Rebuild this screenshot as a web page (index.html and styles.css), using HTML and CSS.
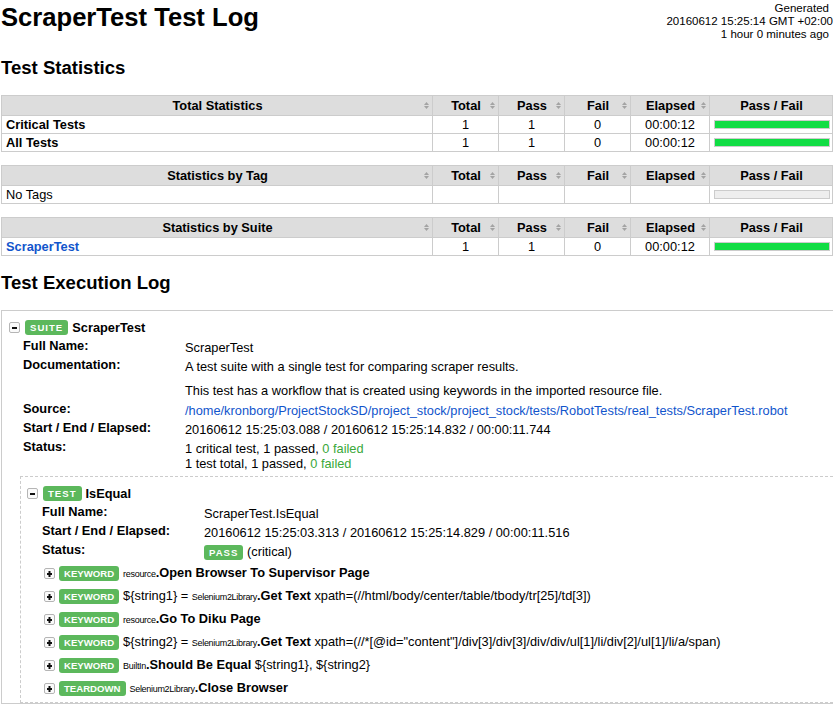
FILE: index.html
```html
<!DOCTYPE html>
<html lang="en">
<head>
<meta charset="utf-8">
<title>ScraperTest Test Log</title>
<link rel="stylesheet" href="styles.css">
</head>
<body>
<div class="header">
  <h1 class="title">ScraperTest Test Log</h1>
  <div class="generated">
    <div class="gen-pad">Generated</div>
    <div>20160612 15:25:14 GMT +02:00</div>
    <div class="gen-pad">1 hour 0 minutes ago</div>
  </div>
</div>

<h2 class="section-title">Test Statistics</h2>

<div class="stats">
  <div class="head"><span class="txt">Total Statistics</span><svg class="sort" width="5" height="7" viewBox="0 0 5 7"><polygon points="0,3 2.5,0 5,3"/><polygon points="0,4 2.5,7 5,4"/></svg></div>
  <div class="head"><span class="txt">Total</span><svg class="sort" width="5" height="7" viewBox="0 0 5 7"><polygon points="0,3 2.5,0 5,3"/><polygon points="0,4 2.5,7 5,4"/></svg></div>
  <div class="head"><span class="txt">Pass</span><svg class="sort" width="5" height="7" viewBox="0 0 5 7"><polygon points="0,3 2.5,0 5,3"/><polygon points="0,4 2.5,7 5,4"/></svg></div>
  <div class="head"><span class="txt">Fail</span><svg class="sort" width="5" height="7" viewBox="0 0 5 7"><polygon points="0,3 2.5,0 5,3"/><polygon points="0,4 2.5,7 5,4"/></svg></div>
  <div class="head"><span class="txt">Elapsed</span><svg class="sort" width="5" height="7" viewBox="0 0 5 7"><polygon points="0,3 2.5,0 5,3"/><polygon points="0,4 2.5,7 5,4"/></svg></div>
  <div class="head"><span class="txt">Pass / Fail</span></div>

  <div class="cell name"><b>Critical Tests</b></div>
  <div class="cell num">1</div>
  <div class="cell num">1</div>
  <div class="cell num">0</div>
  <div class="cell num">00:00:12</div>
  <div class="cell graph"><div class="bar"><div class="pass-bar"></div></div></div>

  <div class="cell name"><b>All Tests</b></div>
  <div class="cell num">1</div>
  <div class="cell num">1</div>
  <div class="cell num">0</div>
  <div class="cell num">00:00:12</div>
  <div class="cell graph"><div class="bar"><div class="pass-bar"></div></div></div>
</div>

<div class="stats">
  <div class="head"><span class="txt">Statistics by Tag</span><svg class="sort" width="5" height="7" viewBox="0 0 5 7"><polygon points="0,3 2.5,0 5,3"/><polygon points="0,4 2.5,7 5,4"/></svg></div>
  <div class="head"><span class="txt">Total</span><svg class="sort" width="5" height="7" viewBox="0 0 5 7"><polygon points="0,3 2.5,0 5,3"/><polygon points="0,4 2.5,7 5,4"/></svg></div>
  <div class="head"><span class="txt">Pass</span><svg class="sort" width="5" height="7" viewBox="0 0 5 7"><polygon points="0,3 2.5,0 5,3"/><polygon points="0,4 2.5,7 5,4"/></svg></div>
  <div class="head"><span class="txt">Fail</span><svg class="sort" width="5" height="7" viewBox="0 0 5 7"><polygon points="0,3 2.5,0 5,3"/><polygon points="0,4 2.5,7 5,4"/></svg></div>
  <div class="head"><span class="txt">Elapsed</span><svg class="sort" width="5" height="7" viewBox="0 0 5 7"><polygon points="0,3 2.5,0 5,3"/><polygon points="0,4 2.5,7 5,4"/></svg></div>
  <div class="head"><span class="txt">Pass / Fail</span></div>

  <div class="cell name">No Tags</div>
  <div class="cell num"></div>
  <div class="cell num"></div>
  <div class="cell num"></div>
  <div class="cell num"></div>
  <div class="cell graph"><div class="bar empty"></div></div>
</div>

<div class="stats">
  <div class="head"><span class="txt">Statistics by Suite</span><svg class="sort" width="5" height="7" viewBox="0 0 5 7"><polygon points="0,3 2.5,0 5,3"/><polygon points="0,4 2.5,7 5,4"/></svg></div>
  <div class="head"><span class="txt">Total</span><svg class="sort" width="5" height="7" viewBox="0 0 5 7"><polygon points="0,3 2.5,0 5,3"/><polygon points="0,4 2.5,7 5,4"/></svg></div>
  <div class="head"><span class="txt">Pass</span><svg class="sort" width="5" height="7" viewBox="0 0 5 7"><polygon points="0,3 2.5,0 5,3"/><polygon points="0,4 2.5,7 5,4"/></svg></div>
  <div class="head"><span class="txt">Fail</span><svg class="sort" width="5" height="7" viewBox="0 0 5 7"><polygon points="0,3 2.5,0 5,3"/><polygon points="0,4 2.5,7 5,4"/></svg></div>
  <div class="head"><span class="txt">Elapsed</span><svg class="sort" width="5" height="7" viewBox="0 0 5 7"><polygon points="0,3 2.5,0 5,3"/><polygon points="0,4 2.5,7 5,4"/></svg></div>
  <div class="head"><span class="txt">Pass / Fail</span></div>

  <div class="cell name"><a class="link strong" href="#">ScraperTest</a></div>
  <div class="cell num">1</div>
  <div class="cell num">1</div>
  <div class="cell num">0</div>
  <div class="cell num">00:00:12</div>
  <div class="cell graph"><div class="bar"><div class="pass-bar"></div></div></div>
</div>

<h2 class="section-title">Test Execution Log</h2>

<div class="suite">
  <div class="el-header">
    <svg class="toggle" width="11" height="11" viewBox="0 0 11 11"><rect x="0.5" y="0.5" width="10" height="10" rx="1.5" class="tbox"/><rect x="3" y="5" width="5" height="2" class="tmark"/></svg>
    <span class="label">SUITE</span>
    <span class="el-name">ScraperTest</span>
  </div>
  <div class="meta">
    <div class="m-key">Full Name:</div>
    <div class="m-val">ScraperTest</div>
    <div class="m-key">Documentation:</div>
    <div class="m-val doc"><p>A test suite with a single test for comparing scraper results.</p><p>This test has a workflow that is created using keywords in the imported resource file.</p></div>
    <div class="m-key">Source:</div>
    <div class="m-val"><a class="link" href="#">/home/kronborg/ProjectStockSD/project_stock/project_stock/tests/RobotTests/real_tests/ScraperTest.robot</a></div>
    <div class="m-key">Start / End / Elapsed:</div>
    <div class="m-val">20160612 15:25:03.088 / 20160612 15:25:14.832 / 00:00:11.744</div>
    <div class="m-key">Status:</div>
    <div class="m-val">1 critical test, 1 passed, <span class="ok">0 failed</span><br>1 test total, 1 passed, <span class="ok">0 failed</span></div>
  </div>

  <div class="test">
    <div class="el-header">
      <svg class="toggle" width="11" height="11" viewBox="0 0 11 11"><rect x="0.5" y="0.5" width="10" height="10" rx="1.5" class="tbox"/><rect x="3" y="5" width="5" height="2" class="tmark"/></svg>
      <span class="label">TEST</span>
      <span class="el-name">IsEqual</span>
    </div>
    <div class="meta">
      <div class="m-key">Full Name:</div>
      <div class="m-val">ScraperTest.IsEqual</div>
      <div class="m-key">Start / End / Elapsed:</div>
      <div class="m-val">20160612 15:25:03.313 / 20160612 15:25:14.829 / 00:00:11.516</div>
      <div class="m-key">Status:</div>
      <div class="m-val"><span class="label inline">PASS</span> (critical)</div>
    </div>

    <div class="keywords">
      <div class="kw">
        <svg class="toggle" width="11" height="11" viewBox="0 0 11 11"><rect x="0.5" y="0.5" width="10" height="10" rx="1.5" class="tbox"/><rect x="3" y="5" width="5" height="2" class="tmark"/><rect x="4.5" y="3" width="2" height="6" class="tmark"/></svg>
        <span class="label kwl">KEYWORD</span>
        <span class="kw-text"><span class="parent">resource</span><b>.Open Browser To Supervisor Page</b></span>
      </div>
      <div class="kw">
        <svg class="toggle" width="11" height="11" viewBox="0 0 11 11"><rect x="0.5" y="0.5" width="10" height="10" rx="1.5" class="tbox"/><rect x="3" y="5" width="5" height="2" class="tmark"/><rect x="4.5" y="3" width="2" height="6" class="tmark"/></svg>
        <span class="label kwl">KEYWORD</span>
        <span class="kw-text">${string1} = <span class="parent">Selenium2Library</span><b>.Get Text</b> xpath=(//html/body/center/table/tbody/tr[25]/td[3])</span>
      </div>
      <div class="kw">
        <svg class="toggle" width="11" height="11" viewBox="0 0 11 11"><rect x="0.5" y="0.5" width="10" height="10" rx="1.5" class="tbox"/><rect x="3" y="5" width="5" height="2" class="tmark"/><rect x="4.5" y="3" width="2" height="6" class="tmark"/></svg>
        <span class="label kwl">KEYWORD</span>
        <span class="kw-text"><span class="parent">resource</span><b>.Go To Diku Page</b></span>
      </div>
      <div class="kw">
        <svg class="toggle" width="11" height="11" viewBox="0 0 11 11"><rect x="0.5" y="0.5" width="10" height="10" rx="1.5" class="tbox"/><rect x="3" y="5" width="5" height="2" class="tmark"/><rect x="4.5" y="3" width="2" height="6" class="tmark"/></svg>
        <span class="label kwl">KEYWORD</span>
        <span class="kw-text">${string2} = <span class="parent">Selenium2Library</span><b>.Get Text</b> xpath=(//*[@id="content"]/div[3]/div[3]/div/div/ul[1]/li/div[2]/ul[1]/li/a/span)</span>
      </div>
      <div class="kw">
        <svg class="toggle" width="11" height="11" viewBox="0 0 11 11"><rect x="0.5" y="0.5" width="10" height="10" rx="1.5" class="tbox"/><rect x="3" y="5" width="5" height="2" class="tmark"/><rect x="4.5" y="3" width="2" height="6" class="tmark"/></svg>
        <span class="label kwl">KEYWORD</span>
        <span class="kw-text"><span class="parent">BuiltIn</span><b>.Should Be Equal</b> ${string1}, ${string2}</span>
      </div>
      <div class="kw">
        <svg class="toggle" width="11" height="11" viewBox="0 0 11 11"><rect x="0.5" y="0.5" width="10" height="10" rx="1.5" class="tbox"/><rect x="3" y="5" width="5" height="2" class="tmark"/><rect x="4.5" y="3" width="2" height="6" class="tmark"/></svg>
        <span class="label kwl">TEARDOWN</span>
        <span class="kw-text"><span class="parent">Selenium2Library</span><b>.Close Browser</b></span>
      </div>
    </div>
  </div>
</div>
</body>
</html>
```

FILE: styles.css
```css
* {
  box-sizing: border-box;
}

html {
  background: #fff;
}

body {
  margin: 0;
  padding: 0 0 0 1px;
  width: 833px;
  overflow: hidden;
  font-family: "Liberation Sans", Arial, Helvetica, sans-serif;
  font-size: 12.8px;
  line-height: 15px;
  color: #000;
}

/* Header */
.header {
  display: flex;
  justify-content: space-between;
  align-items: flex-start;
  width: 832px;
  height: 41px;
}

.title {
  margin: 3px 0 0;
  font-size: 25.6px;
  line-height: 29px;
  font-weight: bold;
}

.generated {
  padding-top: 2px;
  font-size: 11.52px;
  line-height: 13px;
  text-align: right;
  white-space: nowrap;
}

.gen-pad {
  padding-right: 4px;
}

.section-title {
  margin: 16px 0 17px;
  font-size: 18.56px;
  line-height: 21px;
  font-weight: bold;
}

/* Statistics tables */
.stats {
  display: grid;
  grid-template-columns: 430px 65px 65px 65px 78px 122px;
  gap: 1px;
  padding: 1px;
  width: 832px;
  margin-bottom: 13px;
  background: #ccc;
}

.head {
  display: grid;
  grid-template-columns: 1fr auto 1fr;
  align-items: center;
  padding: 2px 3px 2px 4px;
  background: #ddd;
  font-weight: bold;
  line-height: 15px;
  white-space: nowrap;
}

.head .txt {
  grid-column: 2;
}

.head .sort {
  grid-column: 3;
  justify-self: end;
  fill: #a3a3a3;
}

.cell {
  background: #fff;
  padding: 1px 4px;
  line-height: 15px;
  min-height: 17px;
}

.cell.num {
  text-align: center;
}

.cell.graph {
  display: flex;
  align-items: center;
  padding: 0 2px 0 4px;
}

.bar {
  flex: 1;
  height: 9px;
  border: 1px solid #ccc;
  background: #1d4;
}

.bar.empty {
  background: #eee;
}

.pass-bar {
  height: 100%;
}

.link {
  color: #15c;
  text-decoration: none;
}

.link.strong {
  font-weight: bold;
}

/* Execution log */
.suite {
  border: 1px solid #ccc;
  border-right: 0;
  padding: 7px 0 0;
}

.el-header {
  display: flex;
  align-items: center;
  height: 19px;
  white-space: nowrap;
}

.suite > .el-header {
  padding-left: 7px;
}

.test > .el-header {
  padding-left: 6px;
}

.toggle {
  flex: none;
  margin-right: 5px;
}

.kw .toggle {
  margin-right: 4px;
}

.tbox {
  fill: #fafafa;
  stroke: #b5b5b5;
}

.tmark {
  fill: #111;
}

.label {
  flex: none;
  padding: 2px 5px;
  margin-right: 4px;
  border-radius: 3px;
  background: #5cb85c;
  color: #fff;
  font-size: 9.6px;
  line-height: 11px;
  font-weight: bold;
  letter-spacing: 1px;
}

.label.kwl {
  letter-spacing: 0;
}

.label.inline {
  margin-right: 0;
}

.el-name {
  font-weight: bold;
}

.meta {
  display: grid;
  grid-template-columns: 162px 1fr;
  margin-left: 21px;
}

.m-key {
  font-weight: bold;
  padding: 1px 0 3px;
  white-space: nowrap;
}

.m-val {
  padding: 3px 0 1px;
  white-space: nowrap;
}

.m-val.doc {
  padding-bottom: 2px;
}

.doc p {
  margin: 0;
}

.doc p + p {
  margin-top: 9px;
}

.ok {
  color: #3aa83a;
}

.test {
  border: 1px dashed #ccc;
  border-right: 0;
  margin: 4px 0 0 18px;
  padding: 7px 0 2px;
}

.keywords {
  margin-top: 2px;
  padding-left: 23px;
}

.kw {
  display: flex;
  align-items: center;
  height: 23px;
  white-space: nowrap;
}

.parent {
  font-size: 9px;
  letter-spacing: -0.3px;
}
```
